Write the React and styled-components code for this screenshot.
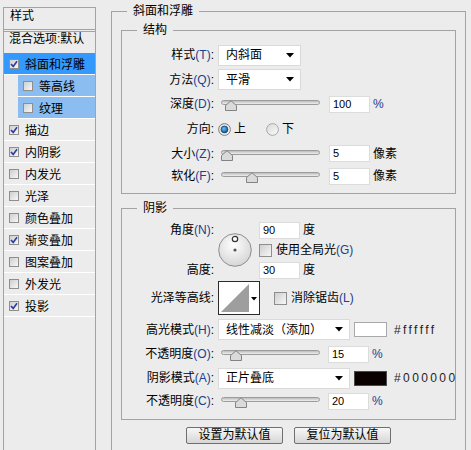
import React from "react";
import styled, { createGlobalStyle } from "styled-components";

const GlobalStyle = createGlobalStyle`
  html, body {
    margin: 0;
    background: #ececec;
  }
  body {
    font-family: "Liberation Sans", "Noto Sans CJK SC", sans-serif;
    font-size: 12px;
    color: #000;
  }
`;

const Page = styled.div`
  display: flex;
  align-items: flex-start;
  width: 471px;
  height: 450px;
  overflow: hidden;
`;

/* ---------- left style list ---------- */

const StyleList = styled.div`
  box-sizing: border-box;
  width: 93px;
  height: 460px;
  margin: 7px 0 0 3px;
  border: 1px solid #a3a3a3;
  border-bottom: none;
  flex-shrink: 0;
`;

const ListHeader = styled.div`
  height: 21px;
  line-height: 16px;
  padding-left: 6px;
  border-bottom: 3px double #a3a3a3;
`;

const BlendRow = styled.div`
  height: 21px;
  line-height: 14px;
  padding-left: 5px;
  white-space: nowrap;
`;

const ListItem = styled.div`
  box-sizing: border-box;
  display: flex;
  align-items: center;
  gap: 6px;
  height: 22px;
  margin-left: ${(p) => (p.$sub ? 14 : 0)}px;
  padding-left: 5px;
  border-bottom: 1px solid #ffffff;
  background: ${(p) => (p.$active ? "#3399ff" : p.$sub ? "#8bbdf0" : "transparent")};
  white-space: nowrap;
`;

const TinyBox = styled.span`
  box-sizing: border-box;
  display: inline-flex;
  align-items: center;
  justify-content: center;
  width: ${(p) => p.$size || 10}px;
  height: ${(p) => p.$size || 10}px;
  border: 1px solid #8e8e8e;
  background: linear-gradient(135deg, #cfcfcf, #f7f7f7);
  flex-shrink: 0;
`;

const Check = ({ checked, size }) => (
  <TinyBox $size={size}>
    {checked && (
      <svg width="8" height="8" viewBox="0 0 8 8">
        <path d="M1 4 L3.2 6.4 L7 1.2" fill="none" stroke="#2c3c9e" strokeWidth="1.6" />
      </svg>
    )}
  </TinyBox>
);

const listItems = [
  { name: "斜面和浮雕", checked: true, active: true },
  { name: "等高线", sub: true },
  { name: "纹理", sub: true },
  { name: "描边", checked: true },
  { name: "内阴影", checked: true },
  { name: "内发光" },
  { name: "光泽" },
  { name: "颜色叠加" },
  { name: "渐变叠加", checked: true },
  { name: "图案叠加" },
  { name: "外发光" },
  { name: "投影", checked: true },
];

/* ---------- right panel ---------- */

const Group = styled.fieldset`
  box-sizing: border-box;
  margin: ${(p) => p.$margin || 0};
  padding: 0;
  min-width: 0;
  border: 1px solid #a3a3a3;
  ${(p) => p.$outer && "width: 355px; height: 460px; border-bottom: none; flex-shrink: 0;"}
`;

const Legend = styled.legend`
  margin-left: 15px;
  padding: 0 6px;
  line-height: 14px;
  font-size: 12px;
`;

const OuterBody = styled.div`
  padding: 5px 9px 0;
`;

const Rows = styled.div`
  padding: ${(p) => p.$pad};
`;

const Row = styled.div`
  display: grid;
  grid-template-columns: 92px auto;
  column-gap: 4px;
  align-items: center;
  height: ${(p) => p.$h}px;
`;

const Label = styled.span`
  text-align: right;
  white-space: nowrap;
  line-height: 14px;
`;

const Key = styled.span`
  color: #233c8c;
`;

const Controls = styled.div`
  display: flex;
  align-items: center;
`;

const SelectBox = styled.div`
  box-sizing: border-box;
  display: flex;
  align-items: center;
  justify-content: space-between;
  width: ${(p) => p.$w}px;
  height: 21px;
  padding: 0 6px 0 7px;
  background: #ffffff;
  border: 1px solid #dadada;
  line-height: 14px;
  white-space: nowrap;
`;

const Select = ({ w, children }) => (
  <SelectBox $w={w}>
    <span>{children}</span>
    <svg width="8" height="5" viewBox="0 0 8 5">
      <polygon points="0,0 8,0 4,4.5" fill="#000" />
    </svg>
  </SelectBox>
);

const SliderWrap = styled.div`
  position: relative;
  width: 99px;
  height: 12px;
  margin-left: 3px;
`;

const Track = styled.div`
  box-sizing: border-box;
  margin-top: 2px;
  height: 5px;
  border: 1px solid #9c9c9c;
  border-radius: 3px;
  background: linear-gradient(#bcbcbc, #efefef);
`;

const Thumb = styled.svg`
  position: absolute;
  top: 2px;
`;

const Slider = ({ value, max }) => {
  const center = Math.max(6, (value / max) * 99);
  return (
    <SliderWrap>
      <Track />
      <Thumb width="14" height="11" viewBox="0 0 14 11" style={{ left: center - 7 }}>
        <path d="M1.5 10.5 V5.5 L7 0.8 L12.5 5.5 V10.5 Z" fill="#dadada" stroke="#838383" />
      </Thumb>
    </SliderWrap>
  );
};

const Field = styled.div`
  box-sizing: border-box;
  width: 41px;
  height: 17px;
  margin-left: ${(p) => p.$ml ?? 8}px;
  padding-left: 3px;
  background: #ffffff;
  border: 1px solid #dcdcdc;
  font-family: "Liberation Sans", sans-serif;
  font-size: 11px;
  line-height: 15px;
`;

const Unit = styled.span`
  margin-left: 3px;
  line-height: 14px;
  color: ${(p) => (p.$key ? "#233c8c" : "#000")};
`;

const Radio = ({ checked }) => (
  <svg width="13" height="13" viewBox="0 0 13 13">
    <defs>
      <linearGradient id={checked ? "radOn" : "radOff"} x1="0" y1="0" x2="1" y2="1">
        <stop offset="0" stopColor="#d9d9d9" />
        <stop offset="1" stopColor="#fbfbfb" />
      </linearGradient>
      <radialGradient id="radDot" cx="40%" cy="35%" r="70%">
        <stop offset="0" stopColor="#6cc0f4" />
        <stop offset="1" stopColor="#0d4f8c" />
      </radialGradient>
    </defs>
    <circle
      cx="6.5"
      cy="6.5"
      r="5.9"
      fill={checked ? "url(#radOn)" : "url(#radOff)"}
      stroke={checked ? "#7d7d7d" : "#a8a8a8"}
    />
    {checked && <circle cx="6.5" cy="6.5" r="3.4" fill="url(#radDot)" stroke="#163f6b" strokeWidth="0.8" />}
  </svg>
);

const RadioOption = styled.span`
  display: inline-flex;
  align-items: center;
  gap: 3px;
  margin-right: ${(p) => p.$mr || 0}px;
  line-height: 14px;
`;

const CheckOption = styled.span`
  display: inline-flex;
  align-items: center;
  gap: 4px;
  margin-left: ${(p) => p.$ml || 0}px;
  line-height: 14px;
  white-space: nowrap;
`;

const AngleGrid = styled.div`
  display: grid;
  grid-template-columns: 92px 34px auto;
  grid-template-rows: 18px 22px 18px;
  column-gap: 4px;
  align-items: center;
`;

const Dial = styled.svg`
  grid-column: 2;
  grid-row: 1 / 4;
`;

const GridLabel = styled(Label)`
  grid-column: 1;
  grid-row: ${(p) => p.$row};
`;

const GridCell = styled(Controls)`
  grid-column: 3;
  grid-row: ${(p) => p.$row};
  padding-left: 3px;
`;

const Swatch = styled.div`
  box-sizing: border-box;
  width: 33px;
  height: 15px;
  margin-left: 4px;
  background: ${(p) => p.$color};
  border: 1px solid ${(p) => (p.$color === "#ffffff" ? "#a9a9a9" : "#4a4a4a")};
`;

const Hex = styled.span`
  margin-left: 7px;
  font-family: "Liberation Sans", sans-serif;
  font-size: 12px;
  letter-spacing: 2.4px;
  color: #1e1e1e;
`;

const ButtonBar = styled.div`
  display: flex;
  justify-content: center;
  gap: 11px;
  margin-top: 7px;
`;

const Button = styled.button`
  box-sizing: border-box;
  width: 97px;
  height: 17px;
  padding: 0;
  border: 1px solid #6f6f6f;
  border-radius: 2px;
  background: linear-gradient(#f7f7f7, #d6d6d6);
  font-family: "Liberation Sans", "Noto Sans CJK SC", sans-serif;
  font-size: 12px;
  line-height: 15px;
  color: #000;
`;

const L = ({ text, k }) => (
  <>
    {text}
    {k && <Key>({k})</Key>}:
  </>
);

export default function App() {
  return (
    <>
      <GlobalStyle />
      <Page>
        <StyleList>
          <ListHeader>样式</ListHeader>
          <BlendRow>混合选项:默认</BlendRow>
          {listItems.map((it) => (
            <ListItem key={it.name} $sub={it.sub} $active={it.active}>
              <Check checked={it.checked} />
              <span>{it.name}</span>
            </ListItem>
          ))}
        </StyleList>

        <Group $outer $margin="4px 0 0 15px">
          <Legend>斜面和浮雕</Legend>
          <OuterBody>
            <Group>
              <Legend>结构</Legend>
              <Rows $pad="6px 0 6px">
                <Row $h={24}>
                  <Label><L text="样式" k="T" /></Label>
                  <Controls><Select w={83}>内斜面</Select></Controls>
                </Row>
                <Row $h={25}>
                  <Label><L text="方法" k="Q" /></Label>
                  <Controls><Select w={83}>平滑</Select></Controls>
                </Row>
                <Row $h={24}>
                  <Label><L text="深度" k="D" /></Label>
                  <Controls>
                    <Slider value={100} max={1000} />
                    <Field $ml={9}>100</Field>
                    <Unit $key>%</Unit>
                  </Controls>
                </Row>
                <Row $h={26}>
                  <Label><L text="方向" /></Label>
                  <Controls>
                    <RadioOption $mr={20}><Radio checked />上</RadioOption>
                    <RadioOption><Radio />下</RadioOption>
                  </Controls>
                </Row>
                <Row $h={23}>
                  <Label><L text="大小" k="Z" /></Label>
                  <Controls>
                    <Slider value={5} max={250} />
                    <Field $ml={9}>5</Field>
                    <Unit>像素</Unit>
                  </Controls>
                </Row>
                <Row $h={22}>
                  <Label><L text="软化" k="F" /></Label>
                  <Controls>
                    <Slider value={5} max={16} />
                    <Field $ml={9}>5</Field>
                    <Unit>像素</Unit>
                  </Controls>
                </Row>
              </Rows>
            </Group>

            <Group $margin="7px 0 0">
              <Legend>阴影</Legend>
              <Rows $pad="6px 0 7px">
                <AngleGrid>
                  <GridLabel $row={1}><L text="角度" k="N" /></GridLabel>
                  <Dial width="34" height="34" viewBox="0 0 34 34">
                    <defs>
                      <radialGradient id="dialFill" cx="45%" cy="35%" r="70%">
                        <stop offset="0" stopColor="#ffffff" />
                        <stop offset="1" stopColor="#d2d2d2" />
                      </radialGradient>
                    </defs>
                    <circle cx="17" cy="17" r="16.3" fill="url(#dialFill)" stroke="#8d8d8d" />
                    <circle cx="17" cy="6" r="2.7" fill="#ffffff" stroke="#333" strokeWidth="1.2" />
                    <circle cx="17" cy="17" r="1.6" fill="#555" />
                  </Dial>
                  <GridCell $row={1}>
                    <Field $ml={0}>90</Field>
                    <Unit>度</Unit>
                  </GridCell>
                  <GridCell $row={2}>
                    <CheckOption>
                      <Check size={13} />
                      <span>使用全局光<Key>(G)</Key></span>
                    </CheckOption>
                  </GridCell>
                  <GridLabel $row={3}><L text="高度" /></GridLabel>
                  <GridCell $row={3}>
                    <Field $ml={0}>30</Field>
                    <Unit>度</Unit>
                  </GridCell>
                </AngleGrid>
                <Row $h={38}>
                  <Label><L text="光泽等高线" /></Label>
                  <Controls>
                    <svg width="42" height="34" viewBox="0 0 42 34">
                      <rect x="0.5" y="0.5" width="41" height="33" fill="#ffffff" stroke="#2b2b2b" />
                      <polygon points="3,31 31,3 31,31" fill="#9e9e9e" />
                      <polygon points="33,16 39,16 36,19.5" fill="#000" />
                    </svg>
                    <CheckOption $ml={14}>
                      <Check size={13} />
                      <span>消除锯齿<Key>(L)</Key></span>
                    </CheckOption>
                  </Controls>
                </Row>
                <Row $h={25}>
                  <Label><L text="高光模式" k="H" /></Label>
                  <Controls>
                    <Select w={132}>线性减淡（添加）</Select>
                    <Swatch $color="#ffffff" />
                    <Hex>#ffffff</Hex>
                  </Controls>
                </Row>
                <Row $h={24}>
                  <Label><L text="不透明度" k="O" /></Label>
                  <Controls>
                    <Slider value={15} max={100} />
                    <Field>15</Field>
                    <Unit $key>%</Unit>
                  </Controls>
                </Row>
                <Row $h={24}>
                  <Label><L text="阴影模式" k="A" /></Label>
                  <Controls>
                    <Select w={132}>正片叠底</Select>
                    <Swatch $color="#0a0000" />
                    <Hex>#000000</Hex>
                  </Controls>
                </Row>
                <Row $h={22}>
                  <Label><L text="不透明度" k="C" /></Label>
                  <Controls>
                    <Slider value={20} max={100} />
                    <Field>20</Field>
                    <Unit $key>%</Unit>
                  </Controls>
                </Row>
              </Rows>
            </Group>

            <ButtonBar>
              <Button>设置为默认值</Button>
              <Button>复位为默认值</Button>
            </ButtonBar>
          </OuterBody>
        </Group>
      </Page>
    </>
  );
}
